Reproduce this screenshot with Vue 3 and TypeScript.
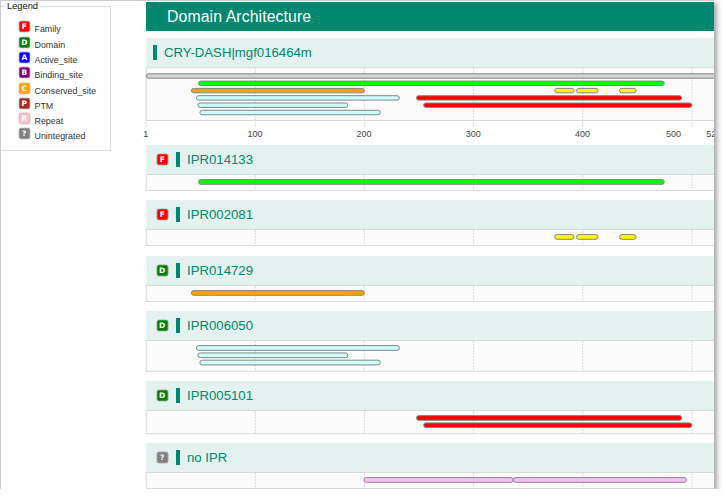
<script setup lang="ts">
interface Bar {
  start: number
  end: number
  row: number
  color: string
}
interface Section {
  name: string
  type?: string
  badge?: string
  height: number
  bars: Bar[]
}

const GREEN = '#00ff00'
const ORANGE = '#ffa300'
const CYAN = '#ccffff'
const RED = '#ff0000'
const YELLOW = '#fff800'
const PINK = '#ffbfff'

const legend = [
  { key: 'F', color: '#ff0000', label: 'Family' },
  { key: 'D', color: '#008000', label: 'Domain' },
  { key: 'A', color: '#0000ff', label: 'Active_site' },
  { key: 'B', color: '#800080', label: 'Binding_site' },
  { key: 'C', color: '#ffa500', label: 'Conserved_site' },
  { key: 'P', color: '#a52a2a', label: 'PTM' },
  { key: 'R', color: '#ffc0cb', label: 'Repeat' },
  { key: '?', color: '#808080', label: 'Unintegrated' },
]

const bar = (start: number, end: number, row: number, color: string): Bar => ({ start, end, row, color })

const family = (row: number) => [bar(53.5, 519.3, row, GREEN)]
const motifs = (row: number) => [
  bar(409.7, 429.1, row, YELLOW),
  bar(431.6, 453.1, row, YELLOW),
  bar(474.5, 491.1, row, YELLOW),
]
const photolyase = (row: number) => [bar(46.4, 219.3, row, ORANGE)]
const fold = (row: number) => [
  bar(51.4, 254.3, row, CYAN),
  bar(52.9, 202.8, row + 1, CYAN),
  bar(54.9, 235.3, row + 2, CYAN),
]
const fad = (row: number) => [bar(271.5, 536.7, row, RED), bar(278.7, 546.7, row + 1, RED)]

const overview: Bar[] = [
  bar(1.5, 600, 0, '#d5d5d5'),
  ...family(1),
  ...photolyase(2),
  ...motifs(2),
  ...fold(3),
  ...fad(3),
]

const sections: Section[] = [
  { name: 'IPR014133', type: 'F', badge: '#ff0000', height: 17, bars: family(0) },
  { name: 'IPR002081', type: 'F', badge: '#ff0000', height: 17, bars: motifs(0) },
  { name: 'IPR014729', type: 'D', badge: '#008000', height: 17, bars: photolyase(0) },
  { name: 'IPR006050', type: 'D', badge: '#008000', height: 31.8, bars: fold(0) },
  { name: 'IPR005101', type: 'D', badge: '#008000', height: 24.2, bars: fad(0) },
  {
    name: 'no IPR',
    type: '?',
    badge: '#808080',
    height: 17,
    bars: [bar(219, 368.3, 0, PINK), bar(368.3, 541.4, 0, PINK)],
  },
]

const grid = [110.3, 219.4, 328.6, 437.7, 547]
const ticks = [
  { x: 0.7, text: '1' },
  { x: 110, text: '100' },
  { x: 219, text: '200' },
  { x: 328.3, text: '300' },
  { x: 437.5, text: '400' },
  { x: 528.6, text: '500' },
  { x: 568.8, text: '523' },
]
const PITCH = 7.3
</script>

<template>
  <div class="panel">
    <aside class="side">
      <fieldset class="legend">
        <legend>Legend</legend>
        <ul>
          <li v-for="item in legend" :key="item.key">
            <svg class="key" width="13" height="13" viewBox="0 0 13 13">
              <rect x="1" y="1" width="11" height="11" rx="2" :fill="item.color" stroke="#c0b8b8" stroke-width="0.8" />
              <text x="6.3" y="9.3" text-anchor="middle">{{ item.key }}</text>
            </svg>
            <span>{{ item.label }}</span>
          </li>
        </ul>
      </fieldset>
    </aside>
    <main class="main">
      <h1>Domain Architecture</h1>
      <section class="overview">
        <h2 class="head first"><i class="mark"></i><span class="name">CRY-DASH|mgf016464m</span></h2>
        <svg class="plot" width="569" height="78">
          <rect x="1.2" y="0.7" width="575" height="52.8" fill="#fbfbfb" stroke="#dadada" />
          <line v-for="x in [1.2, ...grid]" :key="x" :x1="x" :x2="x" y1="1" y2="60" class="grid" />
          <rect
            v-for="(b, i) in overview"
            :key="i"
            :x="b.start"
            :y="6.8 + b.row * PITCH"
            :width="b.end - b.start"
            height="4.4"
            rx="2.2"
            :fill="b.color"
            class="bar"
          />
          <text v-for="t in ticks" :key="t.text" :x="t.x" y="70" text-anchor="middle" class="tick">{{ t.text }}</text>
        </svg>
      </section>
      <section v-for="s in sections" :key="s.name" class="entry">
        <h2 class="head">
          <svg class="badge" width="13" height="13" viewBox="0 0 13 13">
            <rect x="0.9" y="0.9" width="11.2" height="11.2" rx="2" :fill="s.badge" stroke="#b7b0b0" stroke-width="0.8" />
            <text x="6.2" y="9.1" text-anchor="middle">{{ s.type }}</text>
          </svg>
          <i class="mark"></i>
          <span class="name">{{ s.name }}</span>
        </h2>
        <svg class="plot" width="569" :height="s.height">
          <rect x="1.2" y="0.5" width="575" :height="s.height - 1" fill="#fbfbfb" stroke="#dadada" />
          <line v-for="x in grid" :key="x" :x1="x" :x2="x" y1="1" :y2="s.height - 1" class="grid" />
          <rect
            v-for="(b, i) in s.bars"
            :key="i"
            :x="b.start"
            :y="5.6 + b.row * PITCH"
            :width="b.end - b.start"
            height="4.7"
            rx="2.3"
            :fill="b.color"
            class="bar"
          />
        </svg>
      </section>
    </main>
  </div>
</template>

<style>
body {
  margin: 0;
  background: #fff;
  overflow: hidden;
}
</style>

<style scoped>
.panel {
  box-sizing: border-box;
  display: flex;
  width: 714px;
  height: 489px;
  overflow: hidden;
  background: #fff;
  border-left: 1px solid #ccc;
  border-top: 1px solid #ccc;
  box-shadow: 3px 3px 5px rgba(0, 0, 0, 0.36);
  font-family: "Liberation Sans", Arial, sans-serif;
}
.side {
  flex: 0 0 144px;
}
.legend {
  box-sizing: border-box;
  width: 110px;
  height: 150px;
  margin: 0;
  padding: 0;
  border: 1px solid #ddd;
  border-left: 0;
}
.legend legend {
  margin-left: 4px;
  padding: 0 2px;
  font-size: 9.3px;
  line-height: 10px;
  color: #111;
}
.legend ul {
  margin: 0;
  padding: 9.4px 0 0 17px;
  list-style: none;
}
.legend li {
  display: flex;
  align-items: flex-start;
  height: 15.3px;
}
.legend li span {
  margin: 3px 0 0 3.5px;
  font-size: 8.9px;
  line-height: 12px;
  color: #333;
}
.key {
  display: block;
  flex: none;
}
.key text,
.badge text {
  font: bold 7.5px "DejaVu Sans", sans-serif;
  fill: #fff;
}
.main {
  flex: 0 0 569px;
  padding-top: 1px;
}
h1 {
  box-sizing: border-box;
  height: 29px;
  margin: 0 0 7px 1px;
  padding-left: 21px;
  background: #008770;
  color: #fff;
  font-size: 15.8px;
  letter-spacing: 0.1px;
  font-weight: 400;
  line-height: 30px;
}
.overview {
  height: 107px;
}
.head {
  display: flex;
  align-items: center;
  box-sizing: border-box;
  height: 29px;
  margin: 0 0 0 1px;
  padding-left: 10px;
  background: #e3f2ee;
  color: #008770;
  font-size: 13.2px;
  font-weight: 400;
}
.first {
  padding-left: 7px;
}
.mark {
  width: 4px;
  height: 15px;
  background: #008770;
}
.badge {
  margin-right: 7px;
}
.name {
  margin-left: 7px;
  line-height: 15px;
}
.plot {
  display: block;
  overflow: visible;
}
.entry {
  margin-bottom: 9.25px;
}
.grid {
  stroke: #d9d9d9;
  stroke-dasharray: 2 1;
}
.bar {
  stroke: #858585;
  stroke-width: 1;
}
.tick {
  font-size: 9px;
  fill: #444;
}
</style>
